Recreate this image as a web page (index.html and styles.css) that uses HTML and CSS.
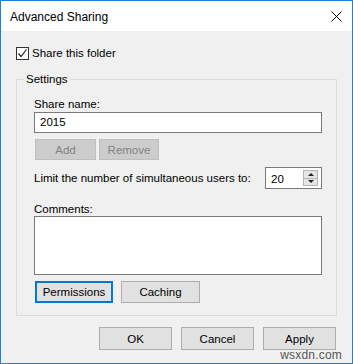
FILE: index.html
```html
<!DOCTYPE html>
<html lang="en">
<head>
  <meta charset="UTF-8" />
  <title>Advanced Sharing</title>
  <link rel="stylesheet" href="styles.css">
</head>
<body>
  <div class="window">
    <div class="title-bar">
      <span class="title">Advanced Sharing</span>
      <button class="close-btn" aria-label="Close">
        <svg width="11" height="11" viewBox="0 0 11 11">
          <path d="M0.5 0.5 L10.5 10.5 M10.5 0.5 L0.5 10.5" stroke="#000" stroke-width="1" fill="none"/>
        </svg>
      </button>
    </div>

    <div class="dialog-body">
      <label class="check-row">
        <span class="checkbox">
          <svg width="11" height="11" viewBox="0 0 11 11">
            <path d="M1.5 5.5 L4 8.5 L9.5 1.5" stroke="#222" stroke-width="1.2" fill="none"/>
          </svg>
        </span>
        Share this folder
      </label>

      <fieldset class="settings">
        <legend>Settings</legend>

        <div class="field-label">Share name:</div>
        <div class="text-input">2015</div>

        <div class="btn-row small">
          <button class="btn disabled add-btn">Add</button>
          <button class="btn disabled remove-btn">Remove</button>
        </div>

        <div class="limit-row">
          <span>Limit the number of simultaneous users to:</span>
          <div class="spin-box">
            <span class="spin-value">20</span>
            <div class="spin-buttons">
              <span class="spin up"></span>
              <span class="spin down"></span>
            </div>
          </div>
        </div>

        <div class="field-label comments-label">Comments:</div>
        <div class="text-area"></div>

        <div class="btn-row small">
          <button class="btn focused perm-btn">Permissions</button>
          <button class="btn cache-btn">Caching</button>
        </div>
      </fieldset>

      <div class="footer">
        <button class="btn footer-btn">OK</button>
        <button class="btn footer-btn">Cancel</button>
        <button class="btn footer-btn">Apply</button>
      </div>
    </div>

    <span class="watermark">wsxdn.com</span>
  </div>
</body>
</html>
```

FILE: styles.css
```css
* {
  margin: 0;
  padding: 0;
  box-sizing: border-box;
}

body {
  font-family: 'Liberation Sans', Arial, sans-serif;
  font-size: 11.5px;
  color: #000;
  background: #fff;
}

.window {
  position: relative;
  width: 353px;
  height: 364px;
  border: 1px solid #1883d7;
  background: #f0f0f0;
}

.title-bar {
  height: 30px;
  background: #fff;
  display: flex;
  align-items: center;
  justify-content: space-between;
  padding-left: 9px;
  padding-right: 9px;
}

.title {
  font-size: 12px;
  margin-top: 1px;
}

.close-btn {
  border: none;
  background: transparent;
  width: 14px;
  height: 14px;
  display: flex;
  align-items: center;
  justify-content: center;
  margin-top: 1px;
}

.dialog-body {
  padding: 14px 16px 0 15px;
}

.check-row {
  display: flex;
  align-items: center;
  height: 16px;
  line-height: 16px;
}

.checkbox {
  width: 13px;
  height: 13px;
  border: 1px solid #333;
  background: #fff;
  display: flex;
  align-items: center;
  justify-content: center;
  margin-right: 3px;
}

.settings {
  margin-top: 10px;
  border: 1px solid #dcdcdc;
  padding: 0 14px 12px 17px;
  width: 321px;
}

.settings legend {
  margin-left: -10px;
  padding: 0 2px;
  line-height: 16px;
}

.field-label {
  line-height: 16px;
  margin-top: 9px;
}

.text-input {
  height: 21px;
  border: 1px solid #7a7a7a;
  background: #fff;
  padding-left: 5px;
  line-height: 19px;
}

.btn-row {
  display: flex;
  gap: 3px;
  margin-top: 6px;
}

.btn {
  font-family: inherit;
  font-size: 11.5px;
  height: 21px;
  background: #e1e1e1;
  border: 1px solid #adadad;
  color: #000;
}

.btn.disabled {
  background: #cccccc;
  border-color: #bfbfbf;
  color: #838383;
}

.add-btn {
  margin-left: 1px;
  width: 61px;
}

.remove-btn {
  width: 60px;
}

.limit-row {
  display: flex;
  align-items: center;
  justify-content: space-between;
  margin-top: 7px;
}

.spin-box {
  width: 57px;
  height: 22px;
  border: 1px solid #7a7a7a;
  background: #fff;
  display: flex;
  align-items: center;
  justify-content: space-between;
  padding-left: 5px;
  padding-right: 3px;
}

.spin-value {
  line-height: 18px;
  margin-top: 1px;
}

.spin-buttons {
  display: flex;
  flex-direction: column;
  width: 15px;
  height: 16px;
}

.spin {
  flex: 1;
  background: #e5e5e5;
  border: 1px solid #b4b4b4;
  display: flex;
  align-items: center;
  justify-content: center;
}

.spin.down {
  border-top: none;
}

.spin::after {
  content: '';
  width: 0;
  height: 0;
  border-left: 3px solid transparent;
  border-right: 3px solid transparent;
}

.spin.up::after {
  border-bottom: 3px solid #222;
}

.spin.down::after {
  border-top: 3px solid #222;
}

.comments-label {
  margin-top: 13px;
  line-height: 14px;
}

.text-area {
  height: 59px;
  border: 1px solid #7a7a7a;
  background: #fff;
}

.perm-btn {
  margin-left: 1px;
  width: 78px;
  height: 22px;
  border: 2px solid #0078d7;
  background: #e1e1e1;
}

.cache-btn {
  margin-left: 5px;
  width: 79px;
  height: 22px;
}

.footer {
  display: flex;
  justify-content: flex-end;
  gap: 9px;
  margin-top: 11px;
}

.footer-btn {
  width: 73px;
  height: 23px;
}

.watermark {
  position: absolute;
  right: 10px;
  bottom: 1px;
  font-size: 12px;
  color: #555;
  letter-spacing: 0.2px;
}
```
